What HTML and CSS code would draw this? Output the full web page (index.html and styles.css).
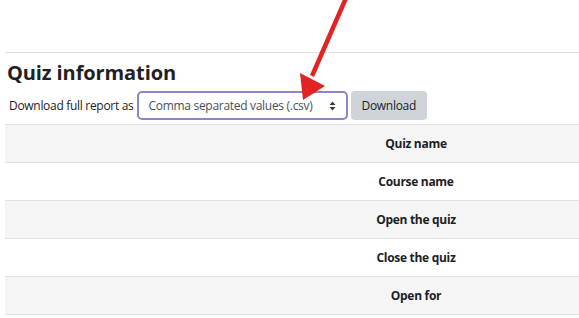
FILE: index.html
```html
<!DOCTYPE html>
<html lang="en">
<head>
    <meta charset="UTF-8">
    <meta name="viewport" content="width=device-width, initial-scale=1.0">
    <title>Quiz information</title>
    <link rel="stylesheet" href="styles.css">
</head>
<body>
    <div class="page">
        <div class="section">
            <h2>Quiz information</h2>
            <form class="download-form">
                <label for="format">Download full report as</label>
                <div class="select-wrap">
                    <select id="format" class="custom-select">
                        <option>Comma separated values (.csv)</option>
                    </select>
                    <span class="caret">
                        <svg width="7" height="10" viewBox="0 0 7 10"><path d="M3.5 0.5 L6.5 4 H0.5 Z M0.5 6 H6.5 L3.5 9.5 Z" fill="#343a40"/></svg>
                    </span>
                </div>
                <button type="button" class="btn">Download</button>
            </form>
            <table class="quiz-table">
                <tr><th>Quiz name</th></tr>
                <tr><th>Course name</th></tr>
                <tr><th>Open the quiz</th></tr>
                <tr><th>Close the quiz</th></tr>
                <tr><th>Open for</th></tr>
            </table>
        </div>
        <!-- annotation arrow -->
        <svg class="arrow" width="70" height="110" viewBox="0 0 70 110">
            <line x1="64" y1="-2" x2="30" y2="76" stroke="#e32222" stroke-width="4.5"/>
            <polygon points="18,73 43,86 21,100" fill="#e32222"/>
        </svg>
    </div>
</body>
</html>
```

FILE: styles.css
```css
body {
    margin: 0;
    padding: 0;
    background-color: #fff;
    font-family: "Open Sans", "Noto Sans", sans-serif;
    color: #1d2125;
    overflow: hidden;
}
.page {
    position: relative;
    padding-top: 52px;
}
.section {
    margin-left: 5px;
    border-top: 1px solid #dee2e6;
}
h2 {
    margin: 8px 0 0 2px;
    font-size: 20px;
    font-weight: 700;
    line-height: 24px;
    letter-spacing: -0.1px;
}
.download-form {
    display: flex;
    align-items: center;
    margin-top: 6px;
    height: 29px;
}
.download-form label {
    font-size: 12px;
    margin-left: 4px;
    margin-right: 3px;
    letter-spacing: -0.3px;
}
.select-wrap {
    position: relative;
}
.custom-select {
    appearance: none;
    -webkit-appearance: none;
    width: 211px;
    height: 29px;
    padding: 0 24px 0 10px;
    border: 2px solid #8c86c6;
    border-radius: 5px;
    background-color: #fff;
    font-family: inherit;
    font-size: 12px;
    color: #495057;
    letter-spacing: -0.3px;
}
.caret {
    position: absolute;
    right: 12px;
    top: 10px;
    line-height: 0;
}
.btn {
    margin-left: 3px;
    height: 29px;
    padding: 0 11px;
    border: none;
    border-radius: 4px;
    background-color: #ced4da;
    color: #1d2125;
    font-family: inherit;
    font-size: 12px;
    letter-spacing: -0.3px;
}
.quiz-table {
    margin-top: 4px;
    width: 822px;
    border-collapse: collapse;
}
.quiz-table th {
    height: 37px;
    border-top: 1px solid #dee2e6;
    border-bottom: 1px solid #dee2e6;
    font-size: 12px;
    font-weight: 700;
    letter-spacing: -0.3px;
    text-align: center;
    padding: 0;
}
.quiz-table tr:nth-child(odd) th {
    background-color: #f5f5f5;
}
.arrow {
    position: absolute;
    left: 282px;
    top: 0;
}
```
